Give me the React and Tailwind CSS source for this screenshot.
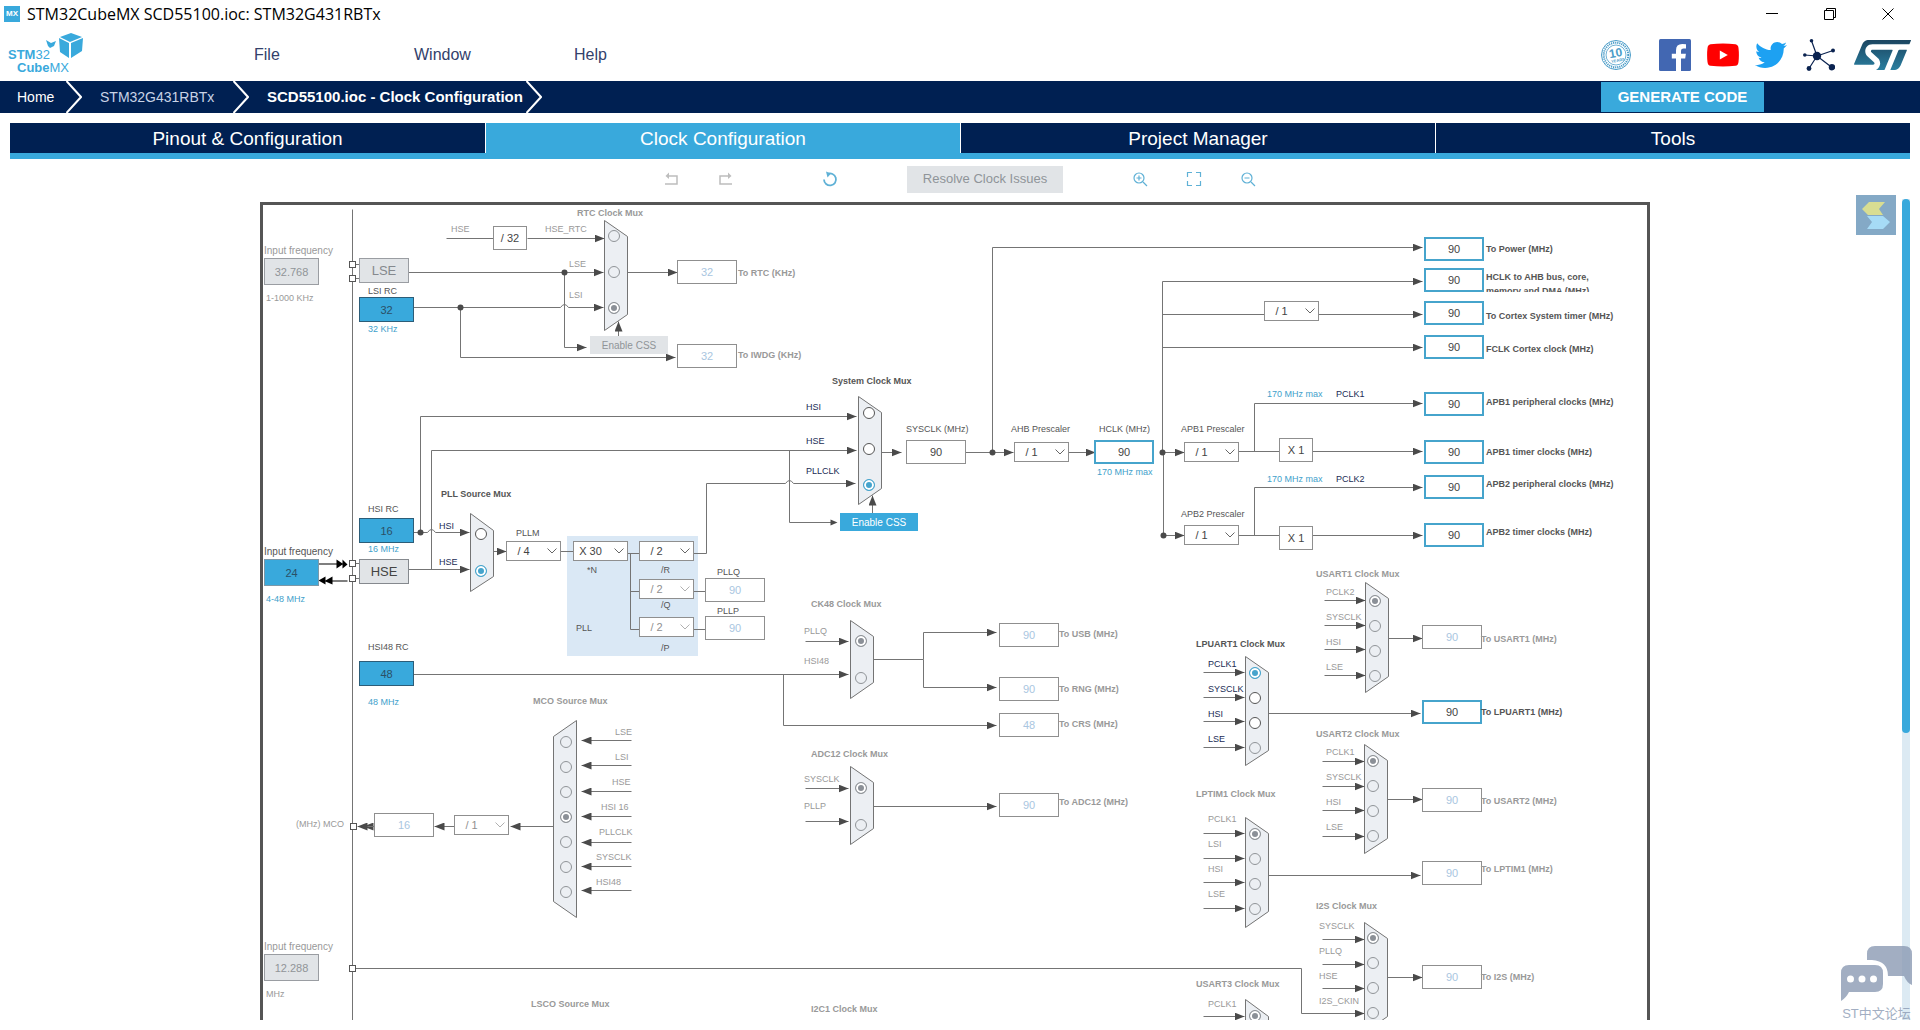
// ============================================================
// CLOCK CONFIGURATION - STM32CubeMX
// ============================================================
// Window shell (title, menu, breadcrumb, tabs, toolbar) around
// the clock tree sheet. The tree itself is data driven: boxes,
// selects, muxes, labels and wires are listed below.
// ============================================================

import React from 'react';
import { FaTwitter } from 'react-icons/fa';
import { SiStmicroelectronics } from 'react-icons/si';

// ==================== SHEET GEOMETRY ====================

// Top-left corner of the sheet in tree coordinates
const ORIGIN = { x: 260, y: 202 };
const SHEET = { width: 1390, height: 830 };

const place = (x, y) => ({ left: x - ORIGIN.x, top: y - ORIGIN.y });

// ==================== TREE DATA ====================

const TONES = {
  dark: 'text-[#555555]',
  dim: 'text-[#999999]',
  navy: 'text-[#1a2c55]',
  blue: 'text-[#3f9fcb]',
};

// [text, x, centre y, tone]
const LABELS = [
  ['LSI RC', 368, 291, 'dark'],
  ['32 KHz', 368, 329, 'blue'],
  ['HSI RC', 368, 509, 'dark'],
  ['16 MHz', 368, 549, 'blue'],
  ['HSI48 RC', 368, 647, 'dark'],
  ['48 MHz', 368, 702, 'blue'],
  ['1-1000 KHz', 266, 298, 'dim'],
  ['4-48 MHz', 266, 599, 'blue'],
  ['MHz', 266, 994, 'dim'],
  ['HSE', 451, 229, 'dim'],
  ['*N', 587, 570, 'dark'],
  ['/R', 661, 570, 'dark'],
  ['/Q', 661, 605, 'dark'],
  ['/P', 661, 648, 'dark'],
  ['PLL', 576, 628, 'dark'],
  ['170 MHz max', 1097, 472, 'blue'],
  ['170 MHz max', 1267, 394, 'blue'],
  ['PCLK1', 1336, 394, 'navy'],
  ['170 MHz max', 1267, 479, 'blue'],
  ['PCLK2', 1336, 479, 'navy'],
];

// Mux titles whose body is below the visible sheet
const TITLES = [
  ['LSCO Source Mux', 531, 1004],
  ['I2C1 Clock Mux', 811, 1009],
];

// Editable source frequencies
const SOURCES = [
  { id: 'lse-in', value: '32.768', x: 264, y: 258, kind: 'inputOff', label: ['Input frequency', 264, 251, 'dim'] },
  { id: 'hse-in', value: '24', x: 264, y: 559, kind: 'inputOn', label: ['Input frequency', 264, 552, 'dark'] },
  { id: 'i2s-in', value: '12.288', x: 264, y: 954, kind: 'inputOff', label: ['Input frequency', 264, 947, 'dim'] },
];

// Internal oscillators
const OSCILLATORS = [
  { name: 'LSI RC', value: '32', x: 359, y: 297 },
  { name: 'HSI RC', value: '16', x: 359, y: 518 },
  { name: 'HSI48 RC', value: '48', x: 359, y: 661 },
];

// Computed frequencies, each with its own caption
const OUTPUTS = [
  { id: 'rtc', value: '32', x: 677, y: 260, kind: 'off', label: ['To RTC (KHz)', 738, 273] },
  { id: 'iwdg', value: '32', x: 677, y: 344, kind: 'off', label: ['To IWDG (KHz)', 738, 355] },
  { id: 'usb', value: '90', x: 999, y: 623, kind: 'off', label: ['To USB (MHz)', 1059, 634] },
  { id: 'rng', value: '90', x: 999, y: 677, kind: 'off', label: ['To RNG (MHz)', 1059, 689] },
  { id: 'crs', value: '48', x: 999, y: 713, kind: 'off', label: ['To CRS (MHz)', 1059, 724] },
  { id: 'adc12', value: '90', x: 999, y: 793, kind: 'off', label: ['To ADC12 (MHz)', 1059, 802] },
  { id: 'usart1', value: '90', x: 1422, y: 625, kind: 'off', label: ['To USART1 (MHz)', 1481, 639] },
  { id: 'lpuart1', value: '90', x: 1422, y: 700, kind: 'on', label: ['To LPUART1 (MHz)', 1481, 712] },
  { id: 'usart2', value: '90', x: 1422, y: 788, kind: 'off', label: ['To USART2 (MHz)', 1481, 801] },
  { id: 'lptim1', value: '90', x: 1422, y: 861, kind: 'off', label: ['To LPTIM1 (MHz)', 1481, 869] },
  { id: 'i2s', value: '90', x: 1422, y: 965, kind: 'off', label: ['To I2S (MHz)', 1481, 977] },
  { id: 'power', value: '90', x: 1424, y: 237, kind: 'on', label: ['To Power (MHz)', 1486, 249] },
  { id: 'ahb', value: '90', x: 1424, y: 268, kind: 'on', label: ['HCLK to AHB bus, core, memory and DMA (MHz)', 1486, 277] },
  { id: 'systick', value: '90', x: 1424, y: 301, kind: 'on', label: ['To Cortex System timer (MHz)', 1486, 316] },
  { id: 'fclk', value: '90', x: 1424, y: 335, kind: 'on', label: ['FCLK Cortex clock (MHz)', 1486, 349] },
  { id: 'apb1p', value: '90', x: 1424, y: 392, kind: 'on', label: ['APB1 peripheral clocks (MHz)', 1486, 402] },
  { id: 'apb1t', value: '90', x: 1424, y: 440, kind: 'on', label: ['APB1 timer clocks (MHz)', 1486, 452] },
  { id: 'apb2p', value: '90', x: 1424, y: 475, kind: 'on', label: ['APB2 peripheral clocks (MHz)', 1486, 484] },
  { id: 'apb2t', value: '90', x: 1424, y: 523, kind: 'on', label: ['APB2 timer clocks (MHz)', 1486, 532] },
];

// Frequencies on the way through the tree
const STAGES = [
  { id: 'pllq', value: '90', x: 705, y: 578, kind: 'off', label: ['PLLQ', 717, 572, 'dark'] },
  { id: 'pllp', value: '90', x: 705, y: 616, kind: 'off', label: ['PLLP', 717, 611, 'dark'] },
  { id: 'sysclk', value: '90', x: 906, y: 440, kind: 'plain', label: ['SYSCLK (MHz)', 906, 429, 'dark'] },
  { id: 'hclk', value: '90', x: 1094, y: 440, kind: 'on', label: ['HCLK (MHz)', 1099, 429, 'dark'] },
  { id: 'mco', value: '16', x: 374, y: 813, kind: 'off', label: ['(MHz) MCO', 296, 824, 'dim'] },
];

const SELECTS = [
  { id: 'pllm', value: '/ 4', x: 506, y: 541, label: ['PLLM', 516, 533, 'dark'] },
  { id: 'plln', value: 'X 30', x: 573, y: 541 },
  { id: 'pllr', value: '/ 2', x: 639, y: 541 },
  { id: 'pllq-div', value: '/ 2', x: 639, y: 579, off: true },
  { id: 'pllp-div', value: '/ 2', x: 639, y: 617, off: true },
  { id: 'ahb-div', value: '/ 1', x: 1014, y: 442, label: ['AHB Prescaler', 1011, 429, 'dark'] },
  { id: 'cortex-div', value: '/ 1', x: 1264, y: 301 },
  { id: 'apb1-div', value: '/ 1', x: 1184, y: 442, label: ['APB1 Prescaler', 1181, 429, 'dark'] },
  { id: 'apb2-div', value: '/ 1', x: 1184, y: 525, label: ['APB2 Prescaler', 1181, 514, 'dark'] },
  { id: 'mco-div', value: '/ 1', x: 454, y: 815, off: true },
];

const FACTORS = [
  { value: '/ 32', x: 493, y: 226 },
  { value: 'X 1', x: 1279, y: 438 },
  { value: 'X 1', x: 1279, y: 526 },
];

// box: [left, right, outer top, inner top, inner bottom, outer bottom]
// options: [name, label x, label y, radio y, disabled]
const MUXES = [
  {
    id: 'rtc', title: ['RTC Clock Mux', 577, 213], box: [604, 627, 220, 236, 314, 330], rx: 614, checked: 2,
    options: [['HSE_RTC', 545, 229, 236], ['LSE', 569, 264, 272], ['LSI', 569, 295, 308]],
  },
  {
    id: 'sys', active: true, title: ['System Clock Mux', 832, 381], box: [858, 881, 396, 412, 488, 504], rx: 869, checked: 2,
    options: [['HSI', 806, 407, 413], ['HSE', 806, 441, 449], ['PLLCLK', 806, 471, 485]],
  },
  {
    id: 'pll', active: true, title: ['PLL Source Mux', 441, 494], box: [470, 493, 513, 530, 576, 591], rx: 481, checked: 1,
    options: [['HSI', 439, 526, 534], ['HSE', 439, 562, 571]],
  },
  {
    id: 'ck48', title: ['CK48 Clock Mux', 811, 604], box: [850, 873, 620, 636, 682, 698], rx: 861, checked: 0,
    options: [['PLLQ', 804, 631, 641], ['HSI48', 804, 661, 678]],
  },
  {
    id: 'adc', title: ['ADC12 Clock Mux', 811, 754], box: [850, 873, 766, 782, 828, 844], rx: 861, checked: 0,
    options: [['SYSCLK', 804, 779, 788], ['PLLP', 804, 806, 825]],
  },
  {
    id: 'mco', title: ['MCO Source Mux', 533, 701], box: [576, 553, 720, 736, 901, 917], rx: 566, checked: 3,
    options: [
      ['LSE', 615, 732, 742], ['LSI', 615, 757, 767], ['HSE', 612, 782, 792], ['HSI 16', 601, 807, 817],
      ['PLLCLK', 599, 832, 842], ['SYSCLK', 596, 857, 867], ['HSI48', 596, 882, 892],
    ],
  },
  {
    id: 'usart1', title: ['USART1 Clock Mux', 1316, 574], box: [1365, 1388, 582, 598, 676, 692], rx: 1375, checked: 0,
    options: [['PCLK2', 1326, 592, 601], ['SYSCLK', 1326, 617, 626], ['HSI', 1326, 642, 651], ['LSE', 1326, 667, 676]],
  },
  {
    id: 'lpuart1', active: true, title: ['LPUART1 Clock Mux', 1196, 644], box: [1245, 1268, 656, 672, 750, 765], rx: 1255, checked: 0,
    options: [['PCLK1', 1208, 664, 673], ['SYSCLK', 1208, 689, 698], ['HSI', 1208, 714, 723], ['LSE', 1208, 739, 748, true]],
  },
  {
    id: 'usart2', title: ['USART2 Clock Mux', 1316, 734], box: [1364, 1387, 744, 760, 838, 853], rx: 1373, checked: 0,
    options: [['PCLK1', 1326, 752, 761], ['SYSCLK', 1326, 777, 786], ['HSI', 1326, 802, 811], ['LSE', 1326, 827, 836]],
  },
  {
    id: 'lptim1', title: ['LPTIM1 Clock Mux', 1196, 794], box: [1245, 1268, 817, 833, 911, 927], rx: 1255, checked: 0,
    options: [['PCLK1', 1208, 819, 834], ['LSI', 1208, 844, 859], ['HSI', 1208, 869, 884], ['LSE', 1208, 894, 909]],
  },
  {
    id: 'i2s', title: ['I2S Clock Mux', 1316, 906], box: [1364, 1387, 922, 938, 1016, 1032], rx: 1373, checked: 0,
    options: [['SYSCLK', 1319, 926, 938], ['PLLQ', 1319, 951, 963], ['HSE', 1319, 976, 988], ['I2S_CKIN', 1319, 1001, 1013]],
  },
  {
    id: 'usart3', title: ['USART3 Clock Mux', 1196, 984], box: [1245, 1268, 999, 1016, 1094, 1110], rx: 1255, checked: 0,
    options: [['PCLK1', 1208, 1004, 1016]],
  },
];

// Wires that end in an arrow head
const ARROWS = [
  // RTC / IWDG
  'M527 238H604', 'M408 272H603', 'M627 272H677', 'M564 272V347H586',
  'M413 307H560q4 -6 8 0H603', 'M460 307V357H675', 'M618 336V321',
  // HSI, HSE and PLLCLK into the system mux
  'M420 532V416H856', 'M431 569V450H856', 'M693 553H706V483H785q4 -6 8 0H855',
  'M413 532H427q4 -6 8 0H469', 'M408 569H469', 'M493 551H506', 'M872 513V495', 'M881 452H901',
  // SYSCLK and HCLK
  'M965 452H1013', 'M1068 452H1095', 'M992 452V247H1422', 'M1162 452V281H1422',
  'M1318 314H1422', 'M1162 347H1422', 'M1162 452H1184', 'M1163 452V535H1184',
  'M1254 451V403H1422', 'M1312 451H1422', 'M1254 535V487H1422', 'M1312 535H1422',
  // CK48 and ADC12
  'M413 674H848', 'M783 674V725H996', 'M805 641H848', 'M873 659H923V632H996', 'M923 659V687H996',
  'M805 788H848', 'M805 821H848', 'M873 806H996',
  // MCO
  'M631 740H581', 'M631 765H581', 'M631 791H581', 'M631 816H581', 'M631 842H581', 'M631 866H581', 'M631 890H581',
  'M553 826H510', 'M454 826H434', 'M374 826H363', 'M374 826H357',
  // Serial ports and timers
  'M1324 600H1365', 'M1324 625H1365', 'M1324 649H1365', 'M1324 675H1365', 'M1388 638H1422',
  'M1203 672H1244', 'M1203 697H1244', 'M1203 721H1244', 'M1203 747H1244', 'M1268 713H1420',
  'M1322 761H1364', 'M1322 786H1364', 'M1322 810H1364', 'M1322 836H1364', 'M1387 799H1422',
  'M1203 833H1244', 'M1203 858H1244', 'M1203 882H1244', 'M1203 908H1244', 'M1268 875H1420',
  'M1322 939H1364', 'M1322 964H1364', 'M1322 988H1364', 'M1387 977H1422',
  'M355 968H1301V1013H1364', 'M1203 1016H1244',
];

// Wires without a head
const LINES = [
  'M352 209V1040', 'M446 238H493', 'M355 264H359', 'M355 278H359', 'M355 563H359', 'M355 578H359',
  'M560 551H573', 'M627 553H639', 'M630 553V629H639', 'M630 591H639', 'M693 591H705', 'M693 629H705',
  'M1162 314H1264', 'M1238 451H1279', 'M1238 535H1279',
];

const DOTS = [[564, 272], [460, 307], [420, 532], [992, 452], [1162, 452], [1163, 535]];
const PINS = [[349, 261], [349, 275], [349, 560], [349, 575], [350, 823], [349, 965]];

// ==================== TREE PARTS ====================

/** Small caption; becomes a real label when it names a control */
function Caption({ text, x, y, tone = 'dark', bold, htmlFor, className = 'text-[9px]' }) {
  const Tag = htmlFor ? 'label' : 'span';
  return (
    <Tag
      htmlFor={htmlFor}
      className={`absolute whitespace-nowrap leading-3 ${className} ${bold ? 'font-bold' : ''} ${TONES[tone]}`}
      style={place(x, y - 6)}
    >
      {text}
    </Tag>
  );
}

const BOX_KINDS = {
  off: 'h-6 w-[60px] border border-[#8f8f8f] bg-white text-[#a9c6df]',
  plain: 'h-6 w-[60px] border border-[#8f8f8f] bg-white text-[#444444]',
  on: 'h-6 w-[60px] border-2 border-[#46a4cc] bg-white text-[#444444]',
  osc: 'h-[25px] w-[55px] border border-[#2c5d78] bg-[#39a9dc] text-[#2b5066]',
  inputOn: 'h-[27px] w-[55px] border border-[#7c98a8] bg-[#39a9dc] text-[#2b5066]',
  inputOff: 'h-[27px] w-[55px] border border-[#9a9da2] bg-[#e1e4e7] text-[#909498]',
};

function FrequencyBox({ id, name, value, x, y, kind }) {
  return (
    <input
      id={id}
      type="text"
      aria-label={name}
      defaultValue={value}
      className={`absolute text-center text-[11px] outline-none ${BOX_KINDS[kind]}`}
      style={place(x, y)}
    />
  );
}

function Divider({ id, value, x, y, off }) {
  return (
    <div className="absolute h-5 w-[55px]" style={place(x, y)}>
      <select
        id={id}
        aria-label={id}
        defaultValue={value}
        className={`block h-5 w-full appearance-none border border-[#8f8f8f] bg-white pr-5 text-[11px] leading-[18px] outline-none [text-align-last:center] ${
          off ? 'text-[#909090]' : 'text-[#444444]'
        }`}
      >
        <option>{value}</option>
      </select>
      <svg
        viewBox="0 0 10 6"
        className={`pointer-events-none absolute right-1 top-[7px] h-[6px] w-[10px] ${off ? 'text-[#b0b0b0]' : 'text-[#666666]'}`}
      >
        <path d="M0.5 0.5 5 5 9.5 0.5" fill="none" stroke="currentColor" />
      </svg>
    </div>
  );
}

function MuxControls({ mux }) {
  const [title, tx, ty] = mux.title;
  return (
    <div role="radiogroup" aria-label={title}>
      <Caption text={title} x={tx} y={ty} tone={mux.active ? 'dark' : 'dim'} bold />
      {mux.options.map(([name, lx, ly, ry, off], i) => (
        <React.Fragment key={name}>
          <Caption text={name} x={lx} y={ly} tone={mux.active ? 'navy' : 'dim'} htmlFor={`${mux.id}-${i}`} />
          <input
            type="radio"
            id={`${mux.id}-${i}`}
            name={mux.id}
            defaultChecked={i === mux.checked}
            className={`absolute h-3 w-3 appearance-none rounded-full border checked:shadow-[inset_0_0_0_2px_#ffffff] ${
              mux.active && !off
                ? 'border-[#555555] bg-white checked:border-[#46a4cc] checked:bg-[#46a4cc]'
                : 'border-[#909498] checked:bg-[#8b9097]'
            }`}
            style={place(mux.rx - 6, ry - 6)}
          />
        </React.Fragment>
      ))}
    </div>
  );
}

/** Everything that is drawn rather than typed: wires, pins, mux bodies */
function Wiring() {
  return (
    <svg
      className="absolute left-0 top-0"
      width={SHEET.width}
      height={SHEET.height}
      viewBox={`${ORIGIN.x} ${ORIGIN.y} ${SHEET.width} ${SHEET.height}`}
      aria-hidden="true"
    >
      <defs>
        <marker id="head" markerUnits="userSpaceOnUse" markerWidth="10" markerHeight="8" refX="10" refY="4" orient="auto">
          <path d="M0 0 10 4 0 8Z" fill="#4a4a4a" />
        </marker>
      </defs>
      <rect x="567" y="536" width="131" height="120" fill="#dae8f5" />
      <g transform="translate(0.5 0.5)" fill="none" stroke="#747474">
        {MUXES.map(({ id, box: [l, r, t1, t2, b1, b2] }) => (
          <path key={id} d={`M${l} ${t1}L${r} ${t2}V${b1}L${l} ${b2}Z`} fill="#eceff3" />
        ))}
        {LINES.map((d) => <path key={d} d={d} />)}
        {ARROWS.map((d) => <path key={d} d={d} markerEnd="url(#head)" />)}
        <path d="M789 450V522H832" />
        <path d="M830 519 837 522 830 525Z" fill="#4a4a4a" stroke="none" />
        {DOTS.map(([x, y]) => <circle key={`${x}-${y}`} cx={x} cy={y} r="3" fill="#4a4a4a" stroke="none" />)}
        {PINS.map(([x, y]) => <rect key={`${x}-${y}`} x={x} y={y} width="6" height="6" fill="#ffffff" stroke="#555555" />)}
        <g fill="#000000" stroke="none">
          <path d="M318 563H336V564H318ZM336 559 342 563V559L347 564 342 568V564L336 568Z" />
          <path d="M332 580H347V581H332ZM332 576V584L325 581V584L318 580 325 576V580Z" />
        </g>
      </g>
    </svg>
  );
}

function ClockTree() {
  return (
    <div className="relative h-[830px] w-[1390px] shrink-0 border-[3px] border-[#555555] bg-white">
      {/* the tree uses the outer corner of the frame as its origin */}
      <div className="absolute -left-[3px] -top-[3px]">
        <Wiring />

        {SOURCES.concat(STAGES).map((s) => (
          <React.Fragment key={s.id}>
            <Caption
              text={s.label[0]}
              x={s.label[1]}
              y={s.label[2]}
              tone={s.label[3]}
              htmlFor={s.id}
              className={s.id.endsWith('-in') ? 'text-[10px]' : 'text-[9px]'}
            />
            <FrequencyBox {...s} />
          </React.Fragment>
        ))}
        {OSCILLATORS.map((o) => <FrequencyBox key={o.name} {...o} kind="osc" />)}

        {OUTPUTS.map((o) => (
          <React.Fragment key={o.id}>
            <FrequencyBox {...o} id={`to-${o.id}`} />
            {o.id === 'ahb' ? (
              <label
                htmlFor="to-ahb"
                className="absolute h-[22px] w-[115px] overflow-hidden text-[9px] font-bold leading-[14px] text-[#555555]"
                style={place(o.label[1], 270)}
              >
                {o.label[0]}
              </label>
            ) : (
              <Caption
                text={o.label[0]}
                x={o.label[1]}
                y={o.label[2]}
                tone={o.kind === 'on' ? 'dark' : 'dim'}
                bold
                htmlFor={`to-${o.id}`}
              />
            )}
          </React.Fragment>
        ))}

        {SELECTS.map((s) => (
          <React.Fragment key={s.id}>
            {s.label && <Caption text={s.label[0]} x={s.label[1]} y={s.label[2]} tone={s.label[3]} htmlFor={s.id} />}
            <Divider {...s} />
          </React.Fragment>
        ))}

        {FACTORS.map((f) => (
          <div
            key={`${f.x}-${f.y}`}
            className="absolute flex h-6 w-[34px] items-center justify-center border border-[#8f8f8f] bg-white text-[11px] text-[#444444]"
            style={place(f.x, f.y)}
          >
            {f.value}
          </div>
        ))}

        {/* External oscillators */}
        <button className="absolute h-[25px] w-[50px] border border-[#9a9da2] bg-[#e1e4e7] text-[13px] text-[#85898e]" style={place(359, 258)}>
          LSE
        </button>
        <button className="absolute h-[25px] w-[50px] border border-[#85898e] bg-[#e1e4e7] text-[13px] text-[#444444]" style={place(359, 559)}>
          HSE
        </button>

        {/* Clock security */}
        <button disabled className="absolute h-[18px] w-[78px] bg-[#e1e4e7] text-[10px] text-[#909498]" style={place(590, 336)}>
          Enable CSS
        </button>
        <button className="absolute h-[18px] w-[78px] bg-[#39a9dc] text-[10px] text-white" style={place(840, 513)}>
          Enable CSS
        </button>

        {MUXES.map((m) => <MuxControls key={m.id} mux={m} />)}
        {LABELS.map(([text, x, y, tone]) => <Caption key={`${text}-${y}`} text={text} x={x} y={y} tone={tone} />)}
        {TITLES.map(([text, x, y]) => <Caption key={text} text={text} x={x} y={y} tone="dim" bold />)}
      </div>
    </div>
  );
}

// ==================== LOGOS ====================

function CubeLogo() {
  return (
    <svg viewBox="0 0 90 50" className="h-[50px] w-[90px]" role="img" aria-label="STM32 CubeMX">
      <g fill="#39a9dc" fontFamily="Liberation Sans, Arial, sans-serif" fontSize="13">
        <text x="8" y="29"><tspan fontWeight="bold">STM</tspan>32</text>
        <text x="17" y="42"><tspan fontWeight="bold">Cube</tspan>MX</text>
        <path d="M60 7 71 3 82 7 70 12ZM59 8 69 13V28L60 22ZM83 8 71 13V28L82 21Z" />
        <path d="M46 10 51 13 56 11 54 16 50 18 48 16Z" />
      </g>
    </svg>
  );
}

function AnniversaryBadge() {
  return (
    <svg viewBox="0 0 32 32" className="h-8 w-8" fill="none" stroke="#4a9cc8">
      <circle cx="16" cy="16" r="14.5" strokeWidth="1" />
      <circle cx="16" cy="16" r="12.3" strokeWidth="2" strokeDasharray="1.2 0.9" />
      <circle cx="16" cy="16" r="10" strokeWidth="0.8" />
      <g transform="rotate(-10 16 16)" fill="#4a9cc8" stroke="none" fontFamily="Liberation Sans, Arial, sans-serif" fontWeight="bold" textAnchor="middle">
        <text x="16" y="18" fontSize="12">10</text>
        <text x="17" y="23" fontSize="4">YEARS</text>
      </g>
    </svg>
  );
}

function FacebookIcon() {
  return (
    <svg viewBox="0 0 32 32" className="h-8 w-8">
      <rect width="32" height="32" rx="1.5" fill="#4267b2" />
      <path d="M22 32V19.6H26.2L26.9 14.8H22V11.7Q22 9.4 24.5 9.4H27V5.2Q25.3 4.9 23.3 4.9Q17 4.9 17 11.2V14.8H12.8V19.6H17V32Z" fill="#ffffff" />
    </svg>
  );
}

function YoutubeIcon() {
  return (
    <svg viewBox="0 0 32 24" className="h-6 w-8">
      <path d="M3.5 1.2Q16 -0.4 28.5 1.2Q31.2 1.6 31.5 5Q32.3 12 31.5 19Q31.2 22.4 28.5 22.8Q16 24.4 3.5 22.8Q0.8 22.4 0.5 19Q-0.3 12 0.5 5Q0.8 1.6 3.5 1.2Z" fill="#ff0000" />
      <path d="M12.8 7.5V16.5L20.8 12Z" fill="#ffffff" />
    </svg>
  );
}

function CommunityIcon() {
  return (
    <svg viewBox="0 0 32 32" className="h-8 w-8" fill="#0b2350" stroke="#0b2350" strokeWidth="1.2">
      <path d="M14 17 8.5 1.8M14 17 1.8 16M14 17 30 11.5M14 17 6 29.5M14 17 29 28.5" />
      <g stroke="none">
        <circle cx="14" cy="17" r="4.2" />
        <circle cx="8.5" cy="1.8" r="1.8" />
        <circle cx="1.8" cy="16" r="1.8" />
        <circle cx="30" cy="11.5" r="2" />
        <circle cx="6" cy="29.5" r="2.4" />
        <circle cx="29" cy="28.2" r="3.2" />
      </g>
    </svg>
  );
}

function StLogo() {
  return (
    <>
      <svg className="absolute h-0 w-0" aria-hidden="true">
        <defs>
          <linearGradient id="st" x1="0" y1="0" x2="0" y2="1">
            <stop offset="0" stopColor="#1b4560" />
            <stop offset="1" stopColor="#2a7fa0" />
          </linearGradient>
        </defs>
      </svg>
      <SiStmicroelectronics viewBox="0 5.7 24 12.6" fill="url(#st)" className="h-[30px] w-[57px]" />
    </>
  );
}

// ==================== TOOLBAR ICONS ====================

function ToolIcon({ label, dim, children }) {
  return (
    <button aria-label={label} className="flex h-7 w-[54px] items-center justify-center">
      <svg viewBox="0 0 16 16" className={`h-4 w-4 ${dim ? 'text-[#bdbdbd]' : 'text-[#5fb1d6]'}`} fill="none" stroke="currentColor" strokeWidth="1.2">
        {children}
      </svg>
    </button>
  );
}

function Toolbar() {
  return (
    <div className="flex h-10 items-center justify-center gap-[50px]">
      <div className="flex">
        <ToolIcon label="Undo" dim>
          <path d="M3 5H13V13H1" strokeWidth="1.5" />
          <path d="M5 1.5 1.5 5 5 8Z" fill="currentColor" stroke="none" />
        </ToolIcon>
        <ToolIcon label="Redo" dim>
          <path d="M12 5H2V13H14" strokeWidth="1.5" />
          <path d="M10 1.5 13.5 5 10 8Z" fill="currentColor" stroke="none" />
        </ToolIcon>
      </div>
      <ToolIcon label="Reset">
        <path d="M5.5 3A6 6 0 1 1 2 8.5" strokeWidth="1.8" />
        <path d="M4 0.5 9 2.5 5.5 6.5Z" fill="currentColor" stroke="none" />
      </ToolIcon>
      <button disabled className="h-[27px] w-[156px] bg-[#e1e4e7] text-[13px] text-[#8f9499]">
        Resolve Clock Issues
      </button>
      <div className="flex">
        <ToolIcon label="Zoom in">
          <circle cx="7" cy="7" r="5" />
          <path d="M11 11 15 15M7 4.5V9.5M4.5 7H9.5" />
        </ToolIcon>
        <ToolIcon label="Fit">
          <path d="M6 1.5H1.5V6M10 1.5H14.5V6M6 14.5H1.5V10M10 14.5H14.5V10" />
        </ToolIcon>
        <ToolIcon label="Zoom out">
          <circle cx="7" cy="7" r="5" />
          <path d="M11 11 15 15M4.5 7H9.5" />
        </ToolIcon>
      </div>
    </div>
  );
}

// ==================== WINDOW SHELL ====================

function TitleBar() {
  return (
    <header className="flex h-7 shrink-0 items-center justify-between pl-1 pr-[3px]">
      <div className="flex items-center gap-[7px]">
        <span className="flex h-4 w-4 items-center justify-center bg-[#39a9dc] text-[8px] font-bold text-white">MX</span>
        <h1 className="font-['Open_Sans',sans-serif] text-base leading-7 text-black">STM32CubeMX SCD55100.ioc: STM32G431RBTx</h1>
      </div>
      <div className="flex">
        <button aria-label="Minimize" className="flex h-7 w-[58px] items-center justify-center">
          <svg viewBox="0 0 12 12" className="h-3 w-3"><path d="M0 5.5H12" stroke="#000000" /></svg>
        </button>
        <button aria-label="Restore" className="flex h-7 w-[58px] items-center justify-center">
          <svg viewBox="0 0 12 12" className="h-3 w-3" fill="none" stroke="#000000"><path d="M0.5 2.5H9.5V11.5H0.5ZM2.5 2.5V0.5H11.5V9.5H9.5" /></svg>
        </button>
        <button aria-label="Close" className="flex h-7 w-[58px] items-center justify-center">
          <svg viewBox="0 0 12 12" className="h-3 w-3"><path d="M0.5 0.5 11.5 11.5M11.5 0.5 0.5 11.5" stroke="#000000" /></svg>
        </button>
      </div>
    </header>
  );
}

function MenuBar() {
  return (
    <div className="flex h-[53px] shrink-0 items-center justify-between pr-[9px]">
      <div className="flex items-center">
        <div className="w-[254px]"><CubeLogo /></div>
        <nav className="flex text-base text-[#33416b]">
          <button className="w-40 text-left">File</button>
          <button className="w-40 text-left">Window</button>
          <button className="w-40 text-left">Help</button>
        </nav>
      </div>
      <div className="flex items-center">
        <AnniversaryBadge />
        <div className="ml-[27px] mr-[19px] flex items-center gap-4">
          <a href="#facebook" aria-label="Facebook"><FacebookIcon /></a>
          <a href="#youtube" aria-label="YouTube"><YoutubeIcon /></a>
          <a href="#twitter" aria-label="Twitter"><FaTwitter className="h-8 w-8 text-[#1da1f2]" /></a>
          <a href="#community" aria-label="ST Community"><CommunityIcon /></a>
        </div>
        <a href="#st" aria-label="STMicroelectronics"><StLogo /></a>
      </div>
    </div>
  );
}

function Crumb({ children, className }) {
  return (
    <li className={`flex items-center justify-between ${className}`}>
      <a href="#crumb" className="whitespace-nowrap">{children}</a>
      <svg viewBox="0 0 16 32" className="h-8 w-4"><path d="M0.5 0 15 16 0.5 32" fill="none" stroke="#ffffff" strokeWidth="2" /></svg>
    </li>
  );
}

function Breadcrumb() {
  return (
    <nav className="flex h-8 shrink-0 items-center justify-between bg-[#002052] pr-[156px] text-white">
      <ol className="flex">
        <Crumb className="w-[82px] pl-[17px] text-sm">Home</Crumb>
        <Crumb className="w-[167px] pl-[18px] text-sm text-[#c9d3e6]">STM32G431RBTx</Crumb>
        <Crumb className="w-[293px] pl-[18px] text-[15px] font-bold">SCD55100.ioc - Clock Configuration</Crumb>
      </ol>
      <button className="h-[30px] w-[163px] bg-[#39a9dc] text-[15px] font-bold">GENERATE CODE</button>
    </nav>
  );
}

const TABS = ['Pinout & Configuration', 'Clock Configuration', 'Project Manager', 'Tools'];

function Tabs() {
  return (
    <div role="tablist" className="mt-[10px] grid shrink-0 grid-cols-4 border-b-[6px] border-[#39a9dc]">
      {TABS.map((tab) => (
        <button
          key={tab}
          role="tab"
          aria-selected={tab === 'Clock Configuration'}
          className={`h-[30px] border-l border-white pt-[2px] text-[19px] leading-7 text-white first:border-l-0 ${
            tab === 'Clock Configuration' ? 'bg-[#39a9dc]' : 'bg-[#002052]'
          }`}
        >
          {tab}
        </button>
      ))}
    </div>
  );
}

/** Floating forum shortcut in the bottom right corner */
function ForumButton() {
  return (
    <a href="#forum" className="absolute bottom-1 right-2 flex w-[71px] flex-col items-center text-[#8b9bb4] opacity-80">
      <svg viewBox="0 0 71 56" className="h-14 w-[71px]" fill="currentColor">
        <path d="M26 14V8Q26 0 34 0H63Q71 0 71 8V39Q66 37 63 30H47Q47 15 31 14Z" />
        <path fillRule="evenodd" d="M0 27Q0 19 8 19H34Q42 19 42 27V38Q42 46 34 46H8Q5 52 0 55ZM9.5 29.5A3.5 3.5 0 1 0 9.5 36.5A3.5 3.5 0 1 0 9.5 29.5ZM21 29.5A3.5 3.5 0 1 0 21 36.5A3.5 3.5 0 1 0 21 29.5ZM32.5 29.5A3.5 3.5 0 1 0 32.5 36.5A3.5 3.5 0 1 0 32.5 29.5Z" />
      </svg>
      <span className="whitespace-nowrap font-['Liberation_Sans','Noto_Sans_CJK_SC',sans-serif] text-[13px] leading-6">ST中文论坛</span>
    </a>
  );
}

// ==================== MAIN RENDER ====================

export default function App() {
  return (
    <div className="relative flex h-screen flex-col overflow-hidden bg-white pb-[10px] font-['Liberation_Sans',Arial,sans-serif]">
      <TitleBar />
      <MenuBar />
      <Breadcrumb />

      <main className="flex min-h-0 flex-1 flex-col px-[10px]">
        <Tabs />
        <Toolbar />

        <div className="flex min-h-0 flex-1 gap-[2px]">
          <section className="flex min-w-0 flex-1 items-start justify-center overflow-hidden pt-[3px]">
            <ClockTree />
          </section>
          {/* Vertical scroll bar of the sheet */}
          <div className="w-2 bg-[#dceaf3]">
            <div className="h-[65%] rounded-full bg-[#39a9dc]" />
          </div>
        </div>
      </main>

      {/* Screen capture shortcut */}
      <svg viewBox="0 0 40 40" className="absolute right-6 top-[195px] h-10 w-10">
        <rect width="40" height="40" fill="#84a9c6" />
        <path d="M13 7H29L23 14 27 20H12L6 14Z" fill="#d8dd92" />
        <path d="M11 21H27L34 27 27 34H11L16 27Z" fill="#a6dbf6" />
      </svg>
      <ForumButton />
    </div>
  );
}
